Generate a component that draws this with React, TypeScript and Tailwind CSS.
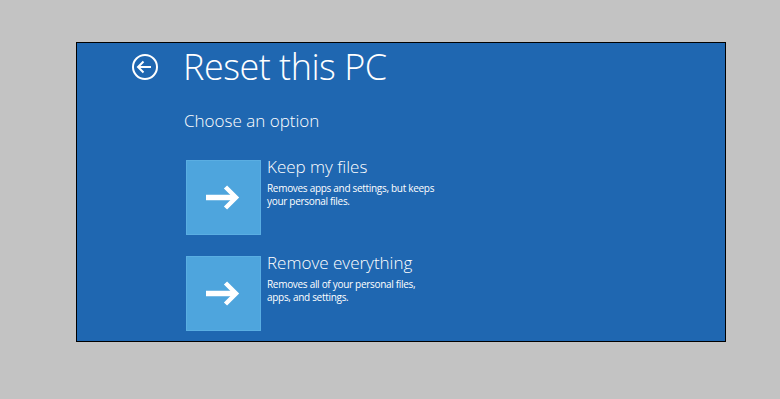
export default function App() {
  const font = { fontFamily: '"Open Sans", "Noto Sans", sans-serif' };
  const Tile = () => (
    <div className="w-[75px] h-[75px] bg-[#4ea5dd] border border-[#5aaee2] flex items-center justify-center">
      <svg width="34" height="25" viewBox="0 0 34 25" className="ml-[-2px] mt-[-1px]">
        <path d="M0 12.5 H30" stroke="white" strokeWidth="5.5" fill="none" />
        <path d="M19.5 2 L30 12.5 L19.5 23" stroke="white" strokeWidth="4.5" fill="none" strokeLinecap="butt" strokeLinejoin="miter" />
      </svg>
    </div>
  );
  return (
    <div className="w-[780px] h-[399px] bg-[#c3c3c3] pt-[42px] pl-[76px]" style={font}>
      <div className="w-[650px] h-[300px] bg-[#1f67b1] border border-black text-white">
        <div className="flex items-center mt-[2px]">
          <svg width="28" height="28" viewBox="0 0 28 28" className="ml-[54px]">
            <circle cx="14" cy="14" r="12" stroke="white" strokeWidth="2" fill="none" />
            <path d="M7.5 14 H20" stroke="white" strokeWidth="2" fill="none" />
            <path d="M12.5 8.5 L7 14 L12.5 19.5" stroke="white" strokeWidth="2" fill="none" />
          </svg>
          <div className="ml-[24px] text-[36px] font-light leading-[44px] tracking-[-0.5px]">Reset this PC</div>
        </div>
        <div className="ml-[107px] mt-[20px] text-[17px] font-light leading-[24px]">Choose an option</div>
        <div className="ml-[109px] mt-[27px] flex flex-col gap-[21px]">
          <div className="flex">
            <Tile />
            <div className="ml-[6px] -mt-[4px]">
              <div className="text-[17px] font-light leading-[22px]">Keep my files</div>
              <div className="text-[10px] leading-[13px] tracking-[-0.3px] mt-[4px]">Removes apps and settings, but keeps<br />your personal files.</div>
            </div>
          </div>
          <div className="flex">
            <Tile />
            <div className="ml-[6px] -mt-[4px]">
              <div className="text-[17px] font-light leading-[22px]">Remove everything</div>
              <div className="text-[10px] leading-[13px] tracking-[-0.3px] mt-[4px]">Removes all of your personal files,<br />apps, and settings.</div>
            </div>
          </div>
        </div>
      </div>
    </div>
  );
}
